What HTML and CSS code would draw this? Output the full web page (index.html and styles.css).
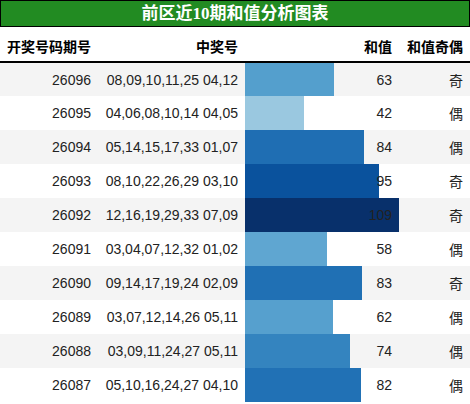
FILE: index.html
```html
<!DOCTYPE html>
<html lang="zh">
<head>
    <meta charset="UTF-8">
    <title>前区近10期和值分析图表</title>
    <link rel="stylesheet" href="styles.css">
</head>
<body>
    <table class="sum-table">
        <caption class="title">前区近10期和值分析图表</caption>
        <thead>
            <tr>
                <th class="col-issue">开奖号码期号</th>
                <th class="col-nums">中奖号</th>
                <th class="col-sum">和值</th>
                <th class="col-odd">和值奇偶</th>
            </tr>
        </thead>
        <tbody>
            <tr>
                <td>26096</td>
                <td>08,09,10,11,25 04,12</td>
                <td class="bar" style="background: linear-gradient(90deg, #549fcd 57.8%, transparent 57.8%)">63</td>
                <td>奇</td>
            </tr>
            <tr>
                <td>26095</td>
                <td>04,06,08,10,14 04,05</td>
                <td class="bar" style="background: linear-gradient(90deg, #9ac8e0 38.5%, transparent 38.5%)">42</td>
                <td>偶</td>
            </tr>
            <tr>
                <td>26094</td>
                <td>05,14,15,17,33 01,07</td>
                <td class="bar" style="background: linear-gradient(90deg, #1f6eb3 77.1%, transparent 77.1%)">84</td>
                <td>偶</td>
            </tr>
            <tr>
                <td>26093</td>
                <td>08,10,22,26,29 03,10</td>
                <td class="bar" style="background: linear-gradient(90deg, #0a529d 87.2%, transparent 87.2%)">95</td>
                <td>奇</td>
            </tr>
            <tr>
                <td>26092</td>
                <td>12,16,19,29,33 07,09</td>
                <td class="bar" style="background: linear-gradient(90deg, #08306b 100%, transparent 100%)">109</td>
                <td>奇</td>
            </tr>
            <tr>
                <td>26091</td>
                <td>03,04,07,12,32 01,02</td>
                <td class="bar" style="background: linear-gradient(90deg, #5fa6d1 53.2%, transparent 53.2%)">58</td>
                <td>偶</td>
            </tr>
            <tr>
                <td>26090</td>
                <td>09,14,17,19,24 02,09</td>
                <td class="bar" style="background: linear-gradient(90deg, #2070b4 76.1%, transparent 76.1%)">83</td>
                <td>奇</td>
            </tr>
            <tr>
                <td>26089</td>
                <td>03,07,12,14,26 05,11</td>
                <td class="bar" style="background: linear-gradient(90deg, #56a0ce 56.9%, transparent 56.9%)">62</td>
                <td>偶</td>
            </tr>
            <tr>
                <td>26088</td>
                <td>03,09,11,24,27 05,11</td>
                <td class="bar" style="background: linear-gradient(90deg, #3484bf 67.9%, transparent 67.9%)">74</td>
                <td>偶</td>
            </tr>
            <tr>
                <td>26087</td>
                <td>05,10,16,24,27 04,10</td>
                <td class="bar" style="background: linear-gradient(90deg, #2171b5 75.2%, transparent 75.2%)">82</td>
                <td>偶</td>
            </tr>
        </tbody>
    </table>
</body>
</html>
```

FILE: styles.css
```css
*{
    margin: 0;
    padding: 0;
    box-sizing: border-box;
}
body{
    background: #fff;
    font-family: "Liberation Sans", "Noto Sans CJK SC", sans-serif;
    color: #222;
}
.sum-table{
    width: 470px;
    border-collapse: collapse;
    table-layout: fixed;
}
.title{
    height: 27px;
    line-height: 25px;
    background: #228b22;
    border: 1px solid #000;
    color: #fff;
    font-family: "Liberation Serif", "Noto Sans CJK SC", serif;
    font-size: 17px;
    font-weight: bold;
    text-align: center;
}
th{
    height: 35px;
    padding: 4px 7px 0;
    font-size: 14px;
    font-weight: bold;
    text-align: right;
    color: #000;
    border-bottom: 2px solid #000;
}
.col-issue{
    width: 98px;
}
.col-nums{
    width: 147px;
}
.col-sum{
    width: 154px;
}
.col-odd{
    width: 71px;
}
td{
    height: 34px;
    padding: 0 7px;
    font-size: 14px;
    text-align: right;
    white-space: nowrap;
}
tbody tr:nth-child(odd){
    background: #f4f4f4;
}
tbody tr:nth-child(even){
    background: #fff;
}
td.bar{
    padding-right: 7px;
}
```
